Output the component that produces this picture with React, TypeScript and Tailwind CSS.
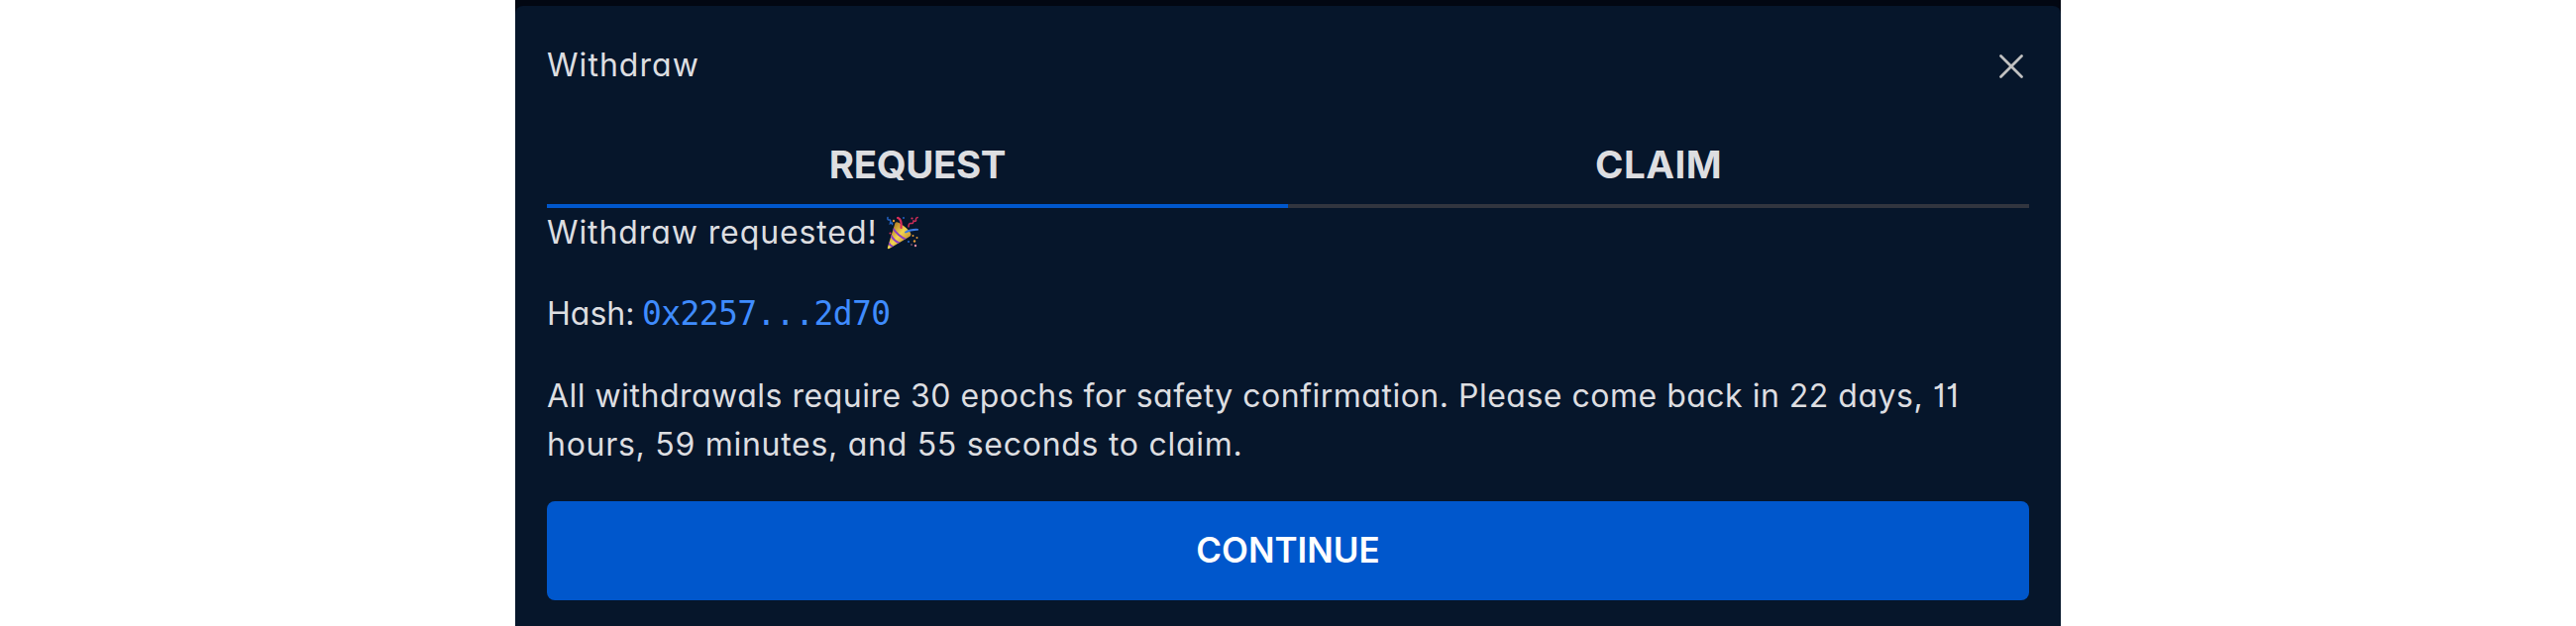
import { ReactNode } from "react";

function PartyPopper() {
  return (
    <svg viewBox="0 0 32 34" className="h-[34px] w-8 shrink-0" fill="none" strokeLinecap="round">
      <defs>
        <linearGradient id="cone" x1="4" y1="14" x2="18" y2="26" gradientUnits="userSpaceOnUse">
          <stop offset="0" stopColor="#b98529" />
          <stop offset="0.55" stopColor="#f3d650" />
          <stop offset="1" stopColor="#cf9c36" />
        </linearGradient>
        <clipPath id="coneClip">
          <path d="M.8 32 8.500 7Q10 4.500 17 10Q24 15.500 24.500 18.500Q24.500 20.500 22 21.500L2.500 33Q.500 33.500 .800 32Z" />
        </clipPath>
      </defs>
      <path d="M.8 32 8.500 7Q10 4.500 17 10Q24 15.500 24.500 18.500Q24.500 20.500 22 21.500L2.500 33Q.500 33.500 .800 32Z" fill="url(#cone)" />
      <g clipPath="url(#coneClip)" stroke="#8d3cc0" strokeWidth="1.900" strokeLinecap="butt">
        <path d="M6 12Q11 20 20 24" />
        <path d="M4 19Q7 25.500 14 28" />
        <path d="M1 26Q3 30 8 32" />
      </g>
      <path d="M11.500 2Q15.500 4 14.500 12" stroke="#dc2f59" strokeWidth="2.200" />
      <path d="M1 1.500Q.500 4.500 2.500 4T3.500 7.500Q6 6 5.500 8.500" stroke="#2463c4" strokeWidth="1.500" />
      <path d="M22 11Q22 7 24.500 7.500T27 5Q30 6 29.500 4T31.200 1.500" stroke="#c92c56" strokeWidth="1.500" />
      <path d="M19 16.500Q24 13.500 31.200 13.800" stroke="#3c7ae0" strokeWidth="1.800" />
      <g fill="#dc2f59"><circle cx="11" cy="2" r="1" /><circle cx="25.500" cy="2.500" r="1.100" /><circle cx="3.500" cy="17.500" r="1" /></g>
      <g fill="#e58aa0"><circle cx="29" cy="30" r="1.200" /><circle cx="25" cy="29" r=".7" /></g>
      <g fill="#e49a36"><circle cx="7" cy="5" r="1.200" /><circle cx="28" cy="25.500" r="1.200" /><circle cx="30.500" cy="22" r="1" /><circle cx="26.500" cy="20" r="1" /></g>
      <g fill="#2463c4"><circle cx="17" cy="2" r="1" /><circle cx="22" cy="26" r="1.100" /></g>
    </svg>
  );
}

function Tab({ active, children }: { active?: boolean; children: ReactNode }) {
  return (
    <button
      className={
        active
          ? "flex h-[82px] flex-1 items-center justify-center border-b-4 border-[#0057cc] pb-0.5"
          : "flex h-[82px] flex-1 items-center justify-center border-b-4 border-[#31353f] pb-0.5"
      }
    >
      {children}
    </button>
  );
}

export default function App() {
  return (
    <div className="flex h-[632px] w-full justify-center overflow-hidden bg-white font-['Inter',sans-serif] text-[32px] leading-[49px] font-[380] text-[#dddee1] [font-feature-settings:'cv11','cv01']">
      <div className="w-[1560px] bg-[#020712] pt-1.5">
        <section className="flex h-[640px] flex-col rounded-t-lg bg-[#06162b] px-8">
          <header className="flex h-[122px] items-center justify-between">
            <h1 className="pb-[3px] tracking-[1.05px] whitespace-nowrap">Withdraw</h1>
            <button aria-label="Close" className="mr-[6px]">
              <svg viewBox="0 0 24 24" className="size-6" stroke="#c1c1c1" strokeWidth="2.700" strokeLinecap="round">
                <path d="M1.500 1.500 22.500 22.500M22.500 1.500 1.500 22.500" />
              </svg>
            </button>
          </header>
          <nav className="flex text-[38.5px] font-bold">
            <Tab active><span className="tracking-[-0.4px]">REQUEST</span></Tab>
            <Tab><span className="tracking-[0.5px]">CLAIM</span></Tab>
          </nav>
          <div className="flex h-[49px] items-center gap-[9px] whitespace-nowrap">
            <span className="w-[334px] tracking-[0.9px]">Withdraw requested!</span>
            <PartyPopper />
          </div>
          <p className="mt-[33px] flex h-[49px] items-baseline whitespace-nowrap">
            <span className="w-[96px]">Hash:</span>
            <a className="font-['DejaVu_Sans_Mono',monospace] text-[33px] tracking-[-0.6px] text-[#3f8cff]">0x2257...2d70</a>
          </p>
          <p className="mt-[34px] whitespace-nowrap">
            <span className="tracking-[0.5px]">All withdrawals require 30 epochs for safety confirmation. Please come back in 22 days, 11</span>
            <br />
            <span className="tracking-[0.72px]">hours, 59 minutes, and 55 seconds to claim.</span>
          </p>
          <button className="mt-[33px] flex h-[100px] shrink-0 items-center justify-center rounded-lg bg-[#0057cc] pb-0.5 text-[35px] font-semibold text-white">
            <span>CONTINUE</span>
          </button>
        </section>
      </div>
    </div>
  );
}
